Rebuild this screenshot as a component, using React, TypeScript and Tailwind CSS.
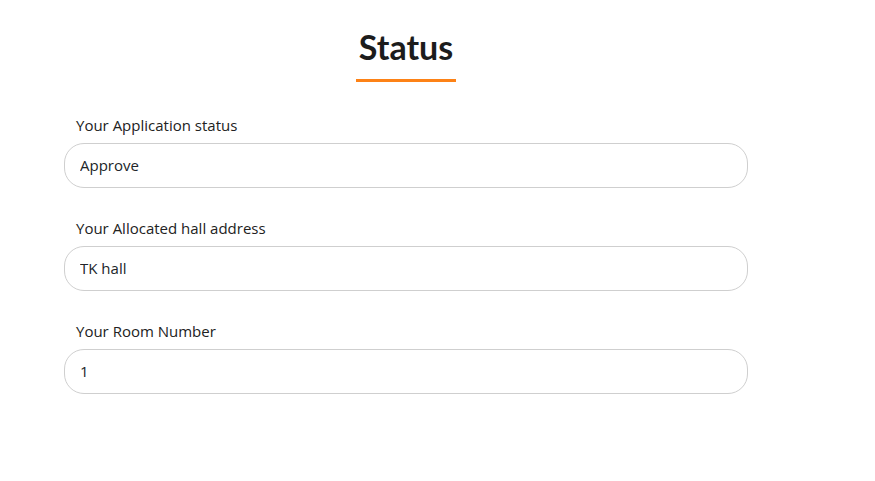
import React from 'react';

const fields = [
    { label: 'Your Application status', value: 'Approve' },
    { label: 'Your Allocated hall address', value: 'TK hall' },
    { label: 'Your Room Number', value: '1' },
];

export default function App() {
    return (
        <div className="min-h-[481px] w-full bg-white font-['Open_Sans',sans-serif]">
            <div className="ml-[64px] w-[684px] pt-[27px]">
                {/* heading */}
                <div className="flex flex-col items-center">
                    <h1 className="font-['Lato',sans-serif] text-[34px] font-bold leading-[40px] text-[#1c1c1c]">Status</h1>
                    <div className="mt-[12px] h-[3px] w-[100px] bg-[#fd8216]" />
                </div>

                <div className="mt-[33px] flex flex-col gap-[30px]">
                    {fields.map((f) => (
                        <div key={f.label} className="flex flex-col">
                            <label className="pl-[12px] text-[15px] leading-[20px] text-[#222]">{f.label}</label>
                            <input
                                readOnly
                                value={f.value}
                                className="mt-[8px] h-[45px] w-full rounded-[20px] border border-[#cfcfcf] bg-white pl-[15px] pb-[1px] font-['Open_Sans',sans-serif] text-[15px] text-[#212529] outline-none"
                            />
                        </div>
                    ))}
                </div>
            </div>
        </div>
    );
}
